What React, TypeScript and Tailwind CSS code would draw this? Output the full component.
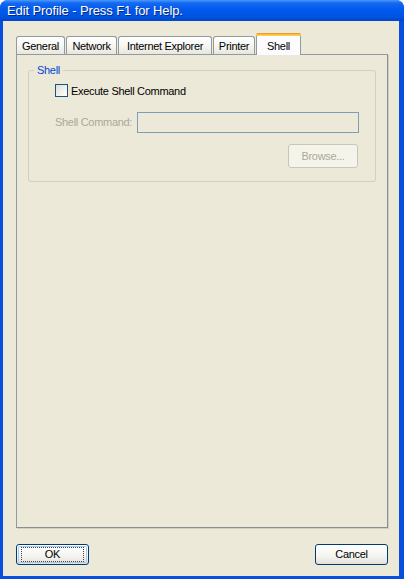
import React from "react";

const tabs = [
  { label: "General", w: "w-[49px]" },
  { label: "Network", w: "w-[51px]" },
  { label: "Internet Explorer", w: "w-[94px]" },
  { label: "Printer", w: "w-[42px]" },
];

function XpButton({ label, isDefault, disabled }: { label: string; isDefault?: boolean; disabled?: boolean }) {
  if (disabled) {
    return (
      <div className="flex h-[24px] w-[70px] items-center justify-center rounded-[3px] border border-[#c9c7ba] bg-[#f5f4ea] text-[#aca899]">
        {label}
      </div>
    );
  }
  return (
    <div className="flex h-[21px] w-[73px] items-center justify-center rounded-[3px] border border-[#003c74] bg-[linear-gradient(180deg,#ffffff_0%,#f4f4f0_60%,#e3e1d6_100%)] p-[1px]">
      <div
        className={`flex h-full w-full items-center justify-center rounded-[2px] ${
          isDefault ? "shadow-[inset_0_0_0_1px_#aac6f2]" : ""
        }`}
      >
        <span
          className={`flex h-[15px] w-[63px] items-center justify-center ${
            isDefault ? "border border-dotted border-[#444]" : ""
          }`}
        >
          {label}
        </span>
      </div>
    </div>
  );
}

export default function App() {
  return (
    <div className="flex h-[579px] w-[404px] flex-col overflow-hidden rounded-t-[8px] bg-[#0a4ee0] font-['Liberation_Sans',Arial,sans-serif] text-[11px] tracking-[-0.3px] text-black">
      {/* title bar */}
      <div className="flex h-[21px] shrink-0 items-center bg-[linear-gradient(180deg,#4a9aff_0%,#1669f0_14%,#005aee_45%,#0053e2_80%,#0046c8_100%)] pl-[7px]">
        <span className="text-[13px] leading-none tracking-[-0.1px] text-white [text-shadow:1px_1px_0_#0a2a88]">
          Edit Profile - Press F1 for Help.
        </span>
      </div>

      {/* client area */}
      <div className="mb-[3px] ml-[3px] mr-[5px] flex flex-1 flex-col bg-[#ece9d8] pl-[13px] pr-[11px] pt-[12px]">
        {/* tab strip */}
        <div className="relative z-10 flex h-[21px] items-end gap-[1px]">
          {tabs.map((t) => (
            <div
              key={t.label}
              className={`${t.w} flex h-[18px] items-center justify-center rounded-t-[3px] border border-b-0 border-[#919b9c] bg-[linear-gradient(180deg,#ffffff_0%,#f6f6f2_50%,#e8e7de_100%)] pt-[2px]`}
            >
              {t.label}
            </div>
          ))}
          <div className="-mb-[1px] flex h-[22px] w-[45px] flex-col rounded-t-[3px] border border-b-0 border-[#919b9c] bg-[#fcfcfe]">
            <div className="-mx-[1px] -mt-[1px] h-[3px] rounded-t-[3px] bg-[linear-gradient(180deg,#e68b2c_0%,#ffc73c_60%,#ffd55e_100%)]" />
            <div className="flex flex-1 items-start justify-center pt-[2px]">Shell</div>
          </div>
        </div>

        {/* tab panel */}
        <div className="flex h-[474px] flex-col border border-[#919b9c] border-b-[#8a8f8f] border-r-[#8a8f8f] bg-[#ece9d8] px-[11px] pt-[7px] shadow-[1px_1px_0_#d0cfc4]">
          <fieldset className="rounded-[3px] border border-[#d0d0bf] pb-[13px] pl-[26px] pr-[16px]">
            <legend className="-ml-[21px] px-[3px] text-[#0046d5]">Shell</legend>

            <div className="mt-[4px] flex items-center gap-[3px]">
              <div className="h-[13px] w-[13px] border border-[#1c5180] bg-[linear-gradient(135deg,#dcdcd7_0%,#f0f0ea_50%,#ffffff_100%)]" />
              <span>Execute Shell Command</span>
            </div>

            <div className="mt-[13px] flex items-center">
              <span className="w-[82px] text-[#aca899]">Shell Command:</span>
              <div className="h-[21px] flex-1 border border-[#7f9db9] bg-[#ece9d8]" />
            </div>

            <div className="mt-[11px] flex justify-end pr-[1px]">
              <XpButton label="Browse..." disabled />
            </div>
          </fieldset>
        </div>

        {/* footer buttons */}
        <div className="mt-[16px] flex justify-between">
          <XpButton label="OK" isDefault />
          <XpButton label="Cancel" />
        </div>
      </div>
    </div>
  );
}
